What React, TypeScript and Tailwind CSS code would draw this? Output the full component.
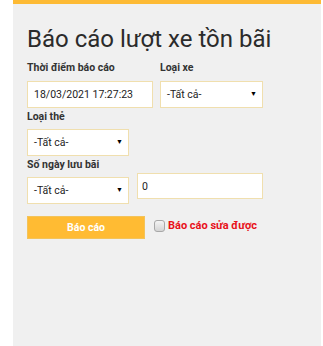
export default function App() {
  return (
    <div className="min-h-[346px] w-[323px] bg-white font-['Roboto',sans-serif]">
      <div className="ml-[13px] mr-[2px] h-[346px] bg-[#f0f0f0]">
        <div className="h-[4px] bg-[#fdba34]" />
        <div className="pl-[14px] pt-[20px]">
          <h1 className="text-[24px] leading-[30px] text-[#2b2b2b]">Báo cáo lượt xe tồn bãi</h1>
          <div className="mt-[8px] flex gap-[7px]">
            <div className="flex flex-col">
              <label className="text-[10.5px] font-bold leading-[12px] text-[#333]">Thời điểm báo cáo</label>
              <input
                readOnly
                value="18/03/2021 17:27:23"
                className="mt-[7px] h-[27px] w-[126px] border border-[#f0dfae] bg-white px-[6px] text-[10.5px] text-[#222] outline-none"
              />
            </div>
            <div className="flex flex-col">
              <label className="text-[10.5px] font-bold leading-[12px] text-[#333]">Loại xe</label>
              <Select className="mt-[7px] w-[103px]" />
            </div>
          </div>
          <label className="mt-[3px] block text-[10.5px] font-bold leading-[12px] text-[#333]">Loại thẻ</label>
          <Select className="mt-[6px] w-[102px]" />
          <label className="mt-[3px] block text-[10.5px] font-bold leading-[12px] text-[#333]">Số ngày lưu bãi</label>
          <div className="mt-[2px] flex items-start gap-[8px]">
            <Select className="mt-[4px] w-[102px]" />
            <input
              readOnly
              value="0"
              className="h-[26px] w-[126px] border border-[#f0dfae] bg-white px-[4px] text-[10.5px] text-[#222] outline-none"
            />
          </div>
          <div className="mt-[12px] flex items-start gap-[9px]">
            <button className="h-[23px] w-[118px] border border-[#f3c35a] bg-[#ffbb33] text-[10.5px] font-bold text-white">
              Báo cáo
            </button>
            <label className="mt-[3px] flex items-center gap-[3px]">
              <span className="h-[12px] w-[11px] rounded-[3px] border border-[#a8a8a8] bg-gradient-to-b from-[#f4f4f4] to-[#d4d4d4]" />
              <span className="text-[11px] font-bold leading-[13px] text-[#e8101a]">Báo cáo sửa được</span>
            </label>
          </div>
        </div>
      </div>
    </div>
  );
}

function Select({ className }: { className: string }) {
  return (
    <div
      className={`flex h-[27px] items-center justify-between border border-[#f0dfae] bg-white pl-[6px] pr-[5px] ${className}`}
    >
      <span className="text-[10.5px] text-[#222]">-Tất cả-</span>
      <span className="text-[7px] text-black">▼</span>
    </div>
  );
}
